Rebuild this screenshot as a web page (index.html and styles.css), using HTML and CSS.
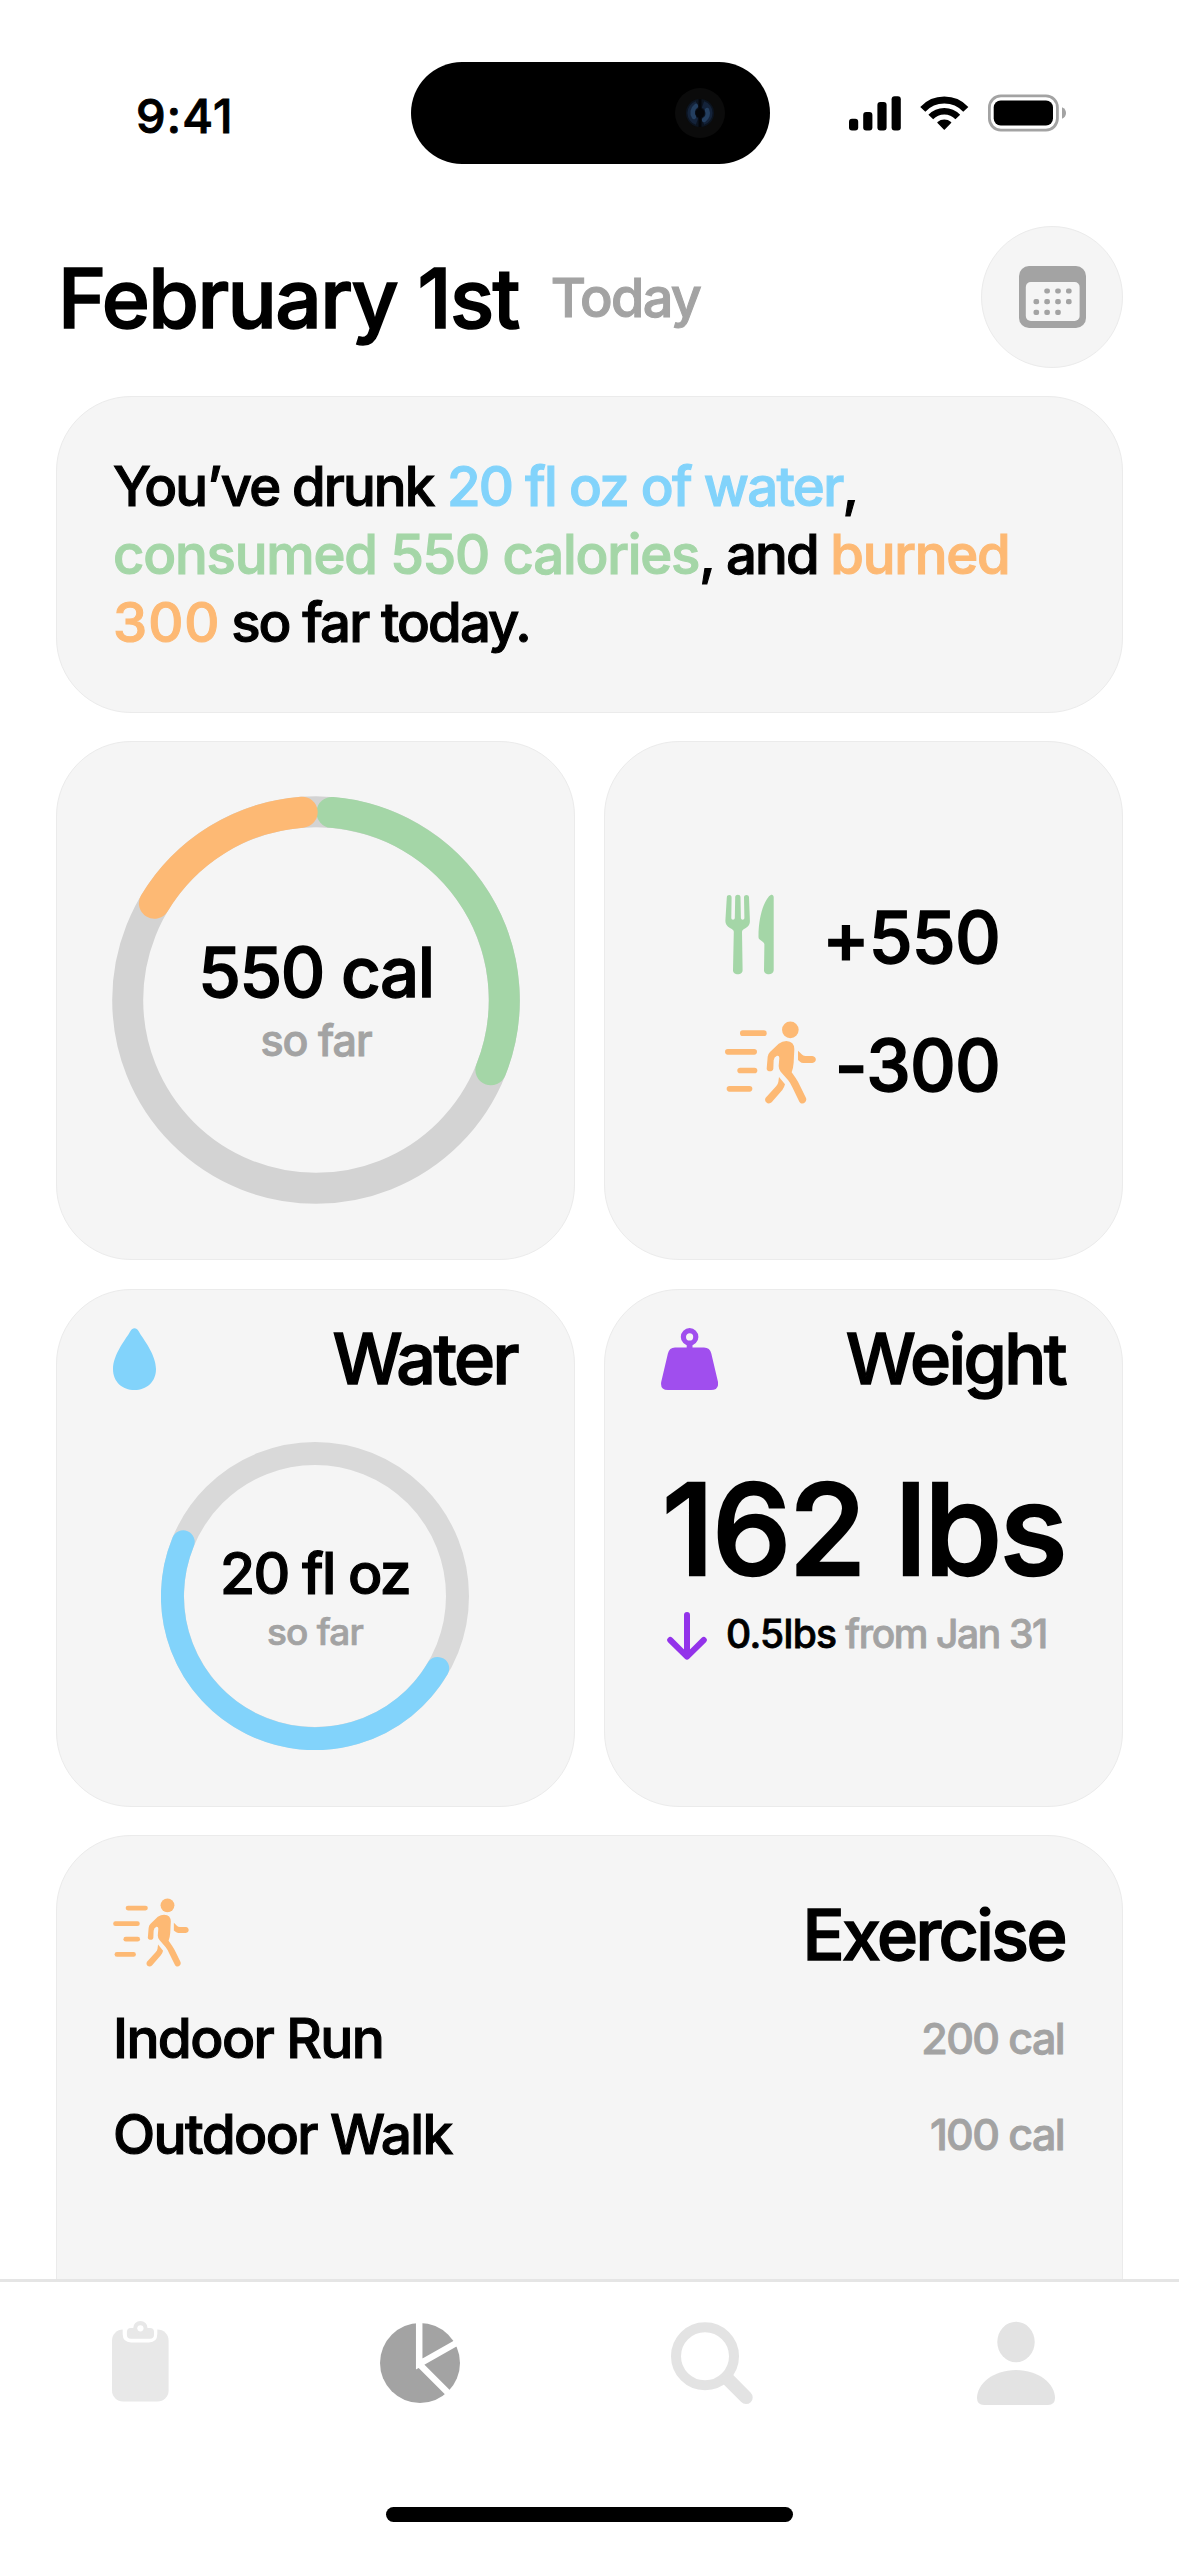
FILE: index.html
```html
<!DOCTYPE html>
<html lang="en">
<head>
    <meta charset="UTF-8">
    <meta name="viewport" content="width=device-width, initial-scale=1.0">
    <title>Today</title>
    <link rel="stylesheet" href="styles.css">
</head>
<body>
    <!-- Shared icons -->
    <svg class="sprite" aria-hidden="true">
        <symbol id="icon-run" viewBox="73 423 273 249">
            <circle cx="269" cy="449.5" r="25"/>
            <rect x="118" y="451" width="80" height="17" rx="8.5"/>
            <rect x="73" y="507" width="96" height="17" rx="8.5"/>
            <rect x="110" y="563" width="60" height="17" rx="8.5"/>
            <rect x="78" y="618" width="77" height="17" rx="8.5"/>
            <path d="M198 566L201 530Q202 522 208 516L234 491Q245 483 257 483Q281 484 281 508L279 548Q278 562 273 577L285 594Q293 606 298 617L316 654C321 668 303 677 296 665L275 622Q270 610 262 600L240 575Q234 567 234 558L236 534Q236 526 229 527Q220 531 219 541L218 566C216 577 199 576 198 566Z"/>
            <path d="M235 591L253 613Q251 622 245 630L213 667C203 676 188 665 195 653L227 618Q232 612 233 606Z"/>
            <path d="M292 512L303 523Q307 528 314 528L335 528C349 529 349 548 335 549L308 549Q302 549 298 545L292 540Z"/>
        </symbol>
    </svg>

    <div class="phone">
        <div class="status-bar">
            <div class="time">9:41</div>
            <div class="island">
                <svg class="camera" viewBox="0 0 50 50">
                    <circle cx="25" cy="25" r="25" fill="#0b0b0b"/>
                    <circle cx="25" cy="25" r="14" fill="#0c1420"/>
                    <path d="M22 16.5A9 9 0 0 0 22 33.5M28 16.5A9 9 0 0 1 28 33.5" fill="none" stroke="#14233a" stroke-width="7"/>
                    <path d="M21 18A8 8 0 0 0 19 29M29 32A8 8 0 0 0 32 22" fill="none" stroke="#243f60" stroke-width="4.5" stroke-linecap="round"/>
                    <path d="M25 11V39" stroke="#04060a" stroke-width="3"/>
                    <circle cx="25" cy="25" r="4.5" fill="#04060a"/>
                </svg>
            </div>
            <div class="status-icons">
                <svg width="52" height="35" viewBox="0 0 52 35">
                    <rect x="0" y="22.8" width="9.2" height="11.7" rx="3"/>
                    <rect x="14.2" y="16" width="9.2" height="18.5" rx="3"/>
                    <rect x="28.4" y="6" width="9.2" height="28.5" rx="3"/>
                    <rect x="42.6" y="0.3" width="9.2" height="34.2" rx="3"/>
                </svg>
                <svg width="49" height="35" viewBox="0 0 49 35">
                    <path d="M2.8 13.3A29.5 29.5 0 0 1 45.8 13.3" fill="none" stroke="#000" stroke-width="7"/>
                    <path d="M10.8 21A18.6 18.6 0 0 1 37.8 21" fill="none" stroke="#000" stroke-width="6.6"/>
                    <path d="M24.3 33L18 26.5A10 10 0 0 1 30.6 26.5Z" stroke="#000" stroke-width="1.4" stroke-linejoin="round"/>
                </svg>
                <svg width="79" height="38" viewBox="0 0 79 38">
                    <rect x="1.4" y="1.9" width="68" height="34.2" rx="11.5" fill="none" stroke="#a3a3a3" stroke-width="2.8"/>
                    <rect x="5.7" y="6.5" width="59.3" height="25" rx="7"/>
                    <path d="M74 13.2Q78 15 78 19Q78 23 74 24.8Z" fill="#a3a3a3"/>
                </svg>
            </div>
        </div>

        <div class="header">
            <h1>February 1st</h1>
            <span class="today">Today</span>
            <div class="calendar-button">
                <svg width="67" height="62" viewBox="0 0 67 62">
                    <rect width="67" height="62" rx="10" fill="#a3a3a3"/>
                    <rect x="6.8" y="16" width="53.8" height="39" rx="5" fill="#f5f5f5"/>
                    <g fill="#a3a3a3">
                        <rect x="25.3" y="22.4" width="5.6" height="5.2" rx="2"/>
                        <rect x="36.2" y="22.4" width="5.6" height="5.2" rx="2"/>
                        <rect x="47" y="22.4" width="5.6" height="5.2" rx="2"/>
                        <rect x="14.5" y="33" width="5.6" height="5.2" rx="2"/>
                        <rect x="25.3" y="33" width="5.6" height="5.2" rx="2"/>
                        <rect x="36.2" y="33" width="5.6" height="5.2" rx="2"/>
                        <rect x="47" y="33" width="5.6" height="5.2" rx="2"/>
                        <rect x="14.5" y="43.7" width="5.6" height="5.2" rx="2"/>
                        <rect x="25.3" y="43.7" width="5.6" height="5.2" rx="2"/>
                        <rect x="36.2" y="43.7" width="5.6" height="5.2" rx="2"/>
                    </g>
                </svg>
            </div>
        </div>

        <div class="content">
            <div class="card summary">
                You’ve drunk <span class="water">20 fl oz of water</span>,<br>
                <span class="food">consumed 550 calories</span>, and <span class="burn">burned</span><br>
                <span class="burn-count">300</span> so far today.
            </div>

            <div class="grid">
                <div class="card ring-card">
                    <div class="ring">
                        <svg width="408" height="408" viewBox="-204 -204 408 408" fill="none" stroke-width="31" stroke-linecap="round">
                            <circle r="188.3" stroke="#d3d3d3"/>
                            <path d="M16 -187.6A188.3 188.3 0 0 1 174.9 69.8" stroke="#a4d6a7"/>
                            <path d="M-13.8 -187.8A188.3 188.3 0 0 0 -161.6 -96.7" stroke="#fdb974"/>
                        </svg>
                        <div class="ring-label">
                            <div class="ring-value">550 cal</div>
                            <div class="ring-note">so far</div>
                        </div>
                    </div>
                </div>

                <div class="card totals">
                    <div class="total">
                        <svg class="food-icon" width="49" height="81" viewBox="24 13.7 49 81">
                            <path d="M25.8 17.2C25.9 14 30.6 14 30.6 17.2L30.3 38Q30.4 39.4 32 39.4Q33.6 39.4 33.8 38L34.2 16.8C34.3 13.7 39.4 13.7 39.5 16.8L39.9 38Q40.1 39.4 41.6 39.4Q43.2 39.4 43.4 38L43 17.2C43 14 47.9 14 48 17.2L48.9 40.5C49 45.5 46 47.2 43 48.8Q41 49.8 41 51.5L41.6 90C41.6 95.4 32 95.4 32 90L32.8 51.5Q32.8 49.8 30.8 48.8C27 46.8 24.3 45 24.4 40Z"/>
                            <path d="M72.7 17C72.7 14 70 13.4 68 16C62 23 57.4 38 57.5 57Q57.5 58.6 59 59.5L62 61.6Q63.4 62.6 63.4 64.2L63 90C63 95.4 72.6 95.4 72.7 90Z"/>
                        </svg>
                        <span>+550</span>
                    </div>
                    <div class="total">
                        <svg class="run-icon" width="91" height="83"><use href="#icon-run"/></svg>
                        <span>-300</span>
                    </div>
                </div>

                <div class="card">
                    <div class="card-header">
                        <svg width="43" height="62" viewBox="0 0 43 62" fill="#82d3fb">
                            <path d="M21.5 0.3C23.3 .3 24.3 1.3 25.5 3C29 9.5 43 26 43 41C43 54 33.5 62 21.5 62C9.5 62 0 54 0 41C0 26 14 9.5 17.5 3C18.7 1.3 19.7 .3 21.5 .3Z"/>
                        </svg>
                        <h2>Water</h2>
                    </div>
                    <div class="ring water-ring">
                        <svg width="308" height="308" viewBox="-154 -154 308 308" fill="none" stroke-width="23" stroke-linecap="round">
                            <circle r="142.5" stroke="#d9d9d9"/>
                            <path d="M122.7 72.5A142.5 142.5 0 0 1 -131.8 -54.2" stroke="#82d3fb"/>
                        </svg>
                        <div class="ring-label">
                            <div class="ring-value">20 fl oz</div>
                            <div class="ring-note">so far</div>
                        </div>
                    </div>
                </div>

                <div class="card">
                    <div class="card-header">
                        <svg width="57" height="62" viewBox="0 0 57 62" fill="#a04eee">
                            <circle cx="28.6" cy="8.9" r="6.2" fill="none" stroke="#a04eee" stroke-width="5.2"/>
                            <path d="M25.7 15H31.5V21H25.7Z"/>
                            <path d="M14 19.5H43Q49 19.5 50.3 25.5L57 54Q58 62 50 62H7Q-1 62 .2 54L6.9 25.5Q8.3 19.5 14 19.5Z"/>
                        </svg>
                        <h2>Weight</h2>
                    </div>
                    <div class="weight-value">162 lbs</div>
                    <div class="weight-change">
                        <svg width="40" height="48" viewBox="0 0 40 48" fill="none" stroke="#9333ea" stroke-width="6" stroke-linecap="round" stroke-linejoin="round">
                            <path d="M20 3V44M3.2 28L20 44.6L36.8 28"/>
                        </svg>
                        <span class="weight-diff">0.5lbs</span>
                        <span class="weight-from">from Jan 31</span>
                    </div>
                </div>
            </div>

            <div class="card exercise">
                <div class="card-header">
                    <svg class="run-icon" width="76" height="69"><use href="#icon-run"/></svg>
                    <h2>Exercise</h2>
                </div>
                <div class="exercise-row">
                    <span>Indoor Run</span>
                    <span class="calories">200 cal</span>
                </div>
                <div class="exercise-row">
                    <span>Outdoor Walk</span>
                    <span class="calories">100 cal</span>
                </div>
            </div>
        </div>

        <div class="tab-bar">
            <div class="tabs">
                <svg width="57" height="82" viewBox="0 0 57 82" fill="#e8e8e8">
                    <rect y="8.6" width="56.6" height="71.8" rx="11"/>
                    <path d="M10.7 0H45.3V13Q45.3 21.4 37 21.4H19Q10.7 21.4 10.7 13Z" fill="#fff"/>
                    <rect x="14.9" y="7" width="27.1" height="10.8" rx="4"/>
                    <circle cx="28.4" cy="7.2" r="7.2"/>
                    <circle cx="28.4" cy="7.3" r="3.1" fill="#fff"/>
                </svg>
                <svg width="80" height="84" viewBox="0 -2 80 84">
                    <circle cx="40" cy="40" r="40" fill="#a3a3a3"/>
                    <path d="M39.2 -3V41L84.2 15.5M39.2 41L75.2 77" fill="none" stroke="#fff" stroke-width="6.5"/>
                </svg>
                <svg width="82" height="84" viewBox="0 0 82 84" fill="none" stroke="#e3e3e3">
                    <circle cx="34" cy="35.3" r="29" stroke-width="10"/>
                    <path d="M57 58.3L75 76.4" stroke-width="13.4" stroke-linecap="round"/>
                </svg>
                <svg class="profile" width="78" height="84" viewBox="0 0 78 84" fill="#e3e3e3">
                    <ellipse cx="39" cy="21" rx="18.7" ry="20.3"/>
                    <path d="M39 49C62 49 78 63 78 77Q78 84 71 84H7Q0 84 0 77C0 63 16 49 39 49Z"/>
                </svg>
            </div>
            <div class="home-indicator"></div>
        </div>
    </div>
</body>
</html>
```
FILE: styles.css
```css
* {
    margin: 0;
    padding: 0;
    box-sizing: border-box;
    -webkit-text-stroke-width: 0.02em;
}

body {
    font-family: Inter, 'Noto Sans', sans-serif;
    font-weight: 500;
    color: #000;
    background: #fff;
}

svg {
    display: block;
    flex: none;
}

.sprite {
    position: absolute;
    width: 0;
    height: 0;
}

.phone {
    width: 1179px;
    height: 2559px;
    display: flex;
    flex-direction: column;
    background: #fff;
    overflow: hidden;
}

/* Status bar */
.status-bar {
    display: grid;
    grid-template-columns: 411px 359px 1fr;
    grid-template-rows: 102px;
    align-items: center;
    height: 226px;
    padding-top: 62px;
    flex: none;
}

.time {
    padding: 5px 0 0 136px;
    font-size: 47px;
    line-height: 1;
    letter-spacing: 1.2px;
}

.island {
    display: flex;
    justify-content: flex-end;
    align-items: center;
    height: 102px;
    padding-right: 45px;
    background: #000;
    border-radius: 51px;
}

.camera {
    width: 50px;
    height: 50px;
}

.status-icons {
    display: flex;
    align-items: center;
    padding-left: 79px;
    gap: 19px;
}

/* Header */
.header {
    display: flex;
    align-items: center;
    height: 142px;
    padding: 0 56px;
    flex: none;
}

.header h1 {
    padding: 3px 0 0 2px;
    font-size: 82px;
    font-weight: 500;
    letter-spacing: -1.6px;
}

.today {
    margin-left: 32px;
    font-size: 54px;
    letter-spacing: -1.7px;
    color: #a3a3a3;
}

.calendar-button {
    display: flex;
    justify-content: center;
    align-items: center;
    width: 142px;
    height: 142px;
    margin-left: auto;
    background: #f5f5f5;
    border: 1px solid #ebebeb;
    border-radius: 50%;
}

/* Cards */
.content {
    flex: 1;
    min-height: 0;
    padding: 28px 56px 0;
    display: flex;
    flex-direction: column;
    gap: 28px;
    overflow: hidden;
}

.card {
    background: #f5f5f5;
    border: 1px solid #ebebeb;
    border-radius: 75px;
    padding: 38px 57px 0 56px;
}

.summary {
    height: 317px;
    padding-top: 56px;
    font-size: 54.5px;
    line-height: 67.8px;
    letter-spacing: -1.9px;
    white-space: nowrap;
    flex: none;
}

.water {
    margin-left: 1px;
    letter-spacing: -1.7px;
    color: #82d3fb;
}

.food {
    letter-spacing: -1.2px;
    color: #a4d6a7;
}

.burn,
.burn-count {
    color: #fdb974;
    letter-spacing: -1.3px;
}

.burn-count {
    margin-right: -2px;
    letter-spacing: 1px;
}

.grid {
    display: grid;
    grid-template-columns: repeat(2, minmax(0, 1fr));
    grid-auto-rows: 518.5px;
    gap: 29px;
    flex: none;
}

.card-header {
    display: flex;
    justify-content: space-between;
    align-items: center;
    height: 62px;
}

.card-header h2 {
    font-size: 70px;
    font-weight: 500;
    line-height: 1;
    letter-spacing: -2.6px;
}

/* Rings */
.ring-card {
    padding: 54px 54px 0 55px;
}

.ring {
    display: grid;
    justify-content: center;
    align-items: center;
}

.ring > * {
    grid-area: 1 / 1;
}

.ring-label {
    display: flex;
    flex-direction: column;
    gap: 9px;
    text-align: center;
}

.ring-value {
    font-size: 69px;
    line-height: 70px;
    letter-spacing: -1.4px;
}

.ring-note {
    font-size: 43px;
    line-height: 48px;
    letter-spacing: -1px;
    color: #a3a3a3;
}

.water-ring {
    margin-top: 52px;
}

.water-ring .ring-label {
    padding-top: 5px;
    gap: 9px;
}

.water-ring .ring-value {
    font-size: 57px;
    line-height: 58px;
    letter-spacing: -1.7px;
}

.water-ring .ring-note {
    font-size: 37px;
    line-height: 40px;
    letter-spacing: -0.8px;
}

/* Calorie totals */
.totals {
    display: flex;
    flex-direction: column;
    justify-content: center;
    gap: 45px;
    padding: 0 122px 4px 120px;
}

.total {
    display: flex;
    justify-content: space-between;
    align-items: center;
    height: 83px;
    font-size: 71px;
    line-height: 1;
    letter-spacing: -0.8px;
}

.total span {
    padding-top: 6px;
}

.food-icon {
    fill: #a4d6a7;
}

.run-icon {
    fill: #fdb974;
}

/* Weight */
.weight-value {
    margin-top: 76px;
    font-size: 126px;
    line-height: 126px;
    letter-spacing: -2.5px;
    text-align: right;
    white-space: nowrap;
}

.weight-change {
    display: flex;
    align-items: center;
    margin: 20px 0 0 6px;
    height: 48px;
    font-size: 39px;
    line-height: 44px;
    white-space: nowrap;
}

.weight-diff {
    margin: 0 9px 4px 19px;
    letter-spacing: -0.7px;
}

.weight-from {
    margin-bottom: 4px;
    letter-spacing: -1.4px;
    color: #a3a3a3;
}

/* Exercise */
.exercise {
    height: 519px;
    padding-top: 62px;
    flex: none;
}

.exercise .card-header {
    height: 69px;
    margin-bottom: 23px;
}

.exercise .card-header h2 {
    padding-top: 4px;
}

.exercise-row {
    display: flex;
    justify-content: space-between;
    align-items: center;
    height: 96px;
    font-size: 55px;
    letter-spacing: -1.6px;
}

.calories {
    padding-right: 1px;
    font-size: 43px;
    letter-spacing: -1.6px;
    color: #a3a3a3;
}

/* Tab bar */
.tab-bar {
    display: flex;
    flex-direction: column;
    justify-content: space-between;
    align-items: center;
    height: 280px;
    padding: 39px 0 37px;
    background: #fff;
    border-top: 3px solid #e5e5e5;
    flex: none;
}

.tabs {
    display: flex;
    gap: 211px;
}

.profile {
    margin: 0 13px;
}

.home-indicator {
    width: 407px;
    height: 15px;
    background: #000;
    border-radius: 8px;
}
```
